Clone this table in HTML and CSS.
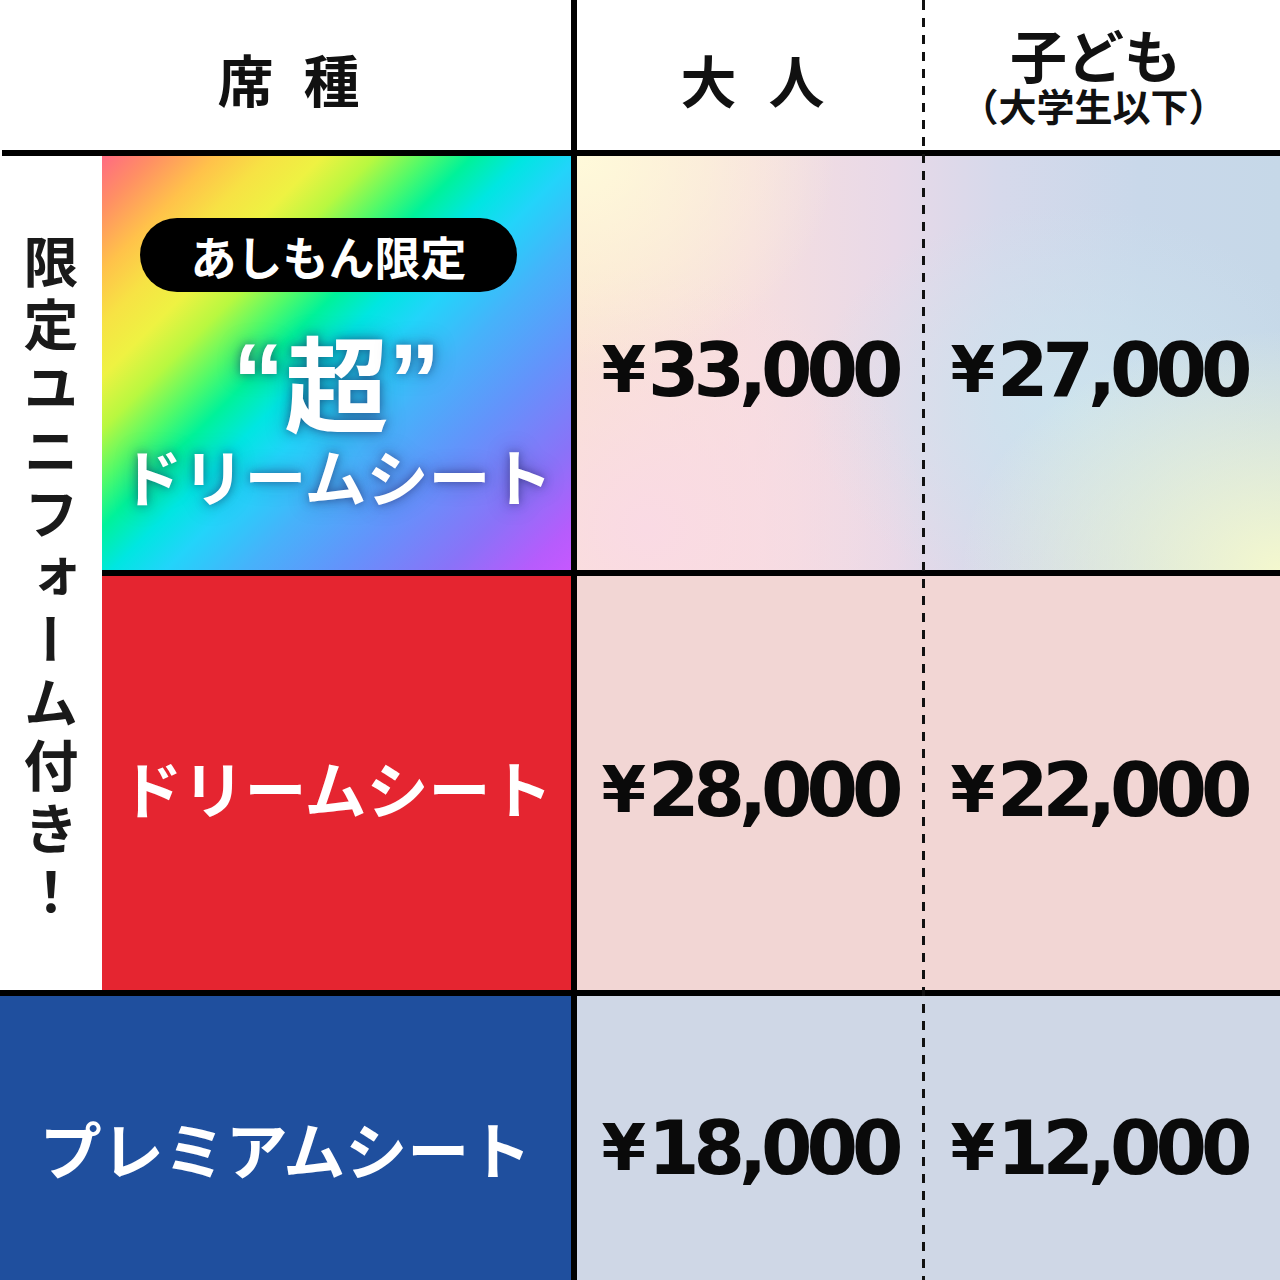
FILE: index.html
```html
<!DOCTYPE html>
<html lang="ja">
<head>
<meta charset="utf-8">
<title>席種・料金</title>
<link rel="stylesheet" href="styles.css">
</head>
<body>
<div class="chart">
  <div class="hd hd-seat"><span>席</span><span>種</span></div>
  <div class="hd hd-adult"><span>大</span><span>人</span></div>
  <div class="hd hd-child">
    <div class="child-main">子ども</div>
    <div class="child-sub">（大学生以下）</div>
  </div>
  <div class="hline hline-top"></div>

  <div class="vtext">限定ユニフォーム付き！</div>

  <div class="seat seat-super">
    <div class="pill">あしもん限定</div>
    <div class="super-title"><span class="q">“</span>超<span class="q">”</span></div>
    <div class="super-name">ドリームシート</div>
  </div>
  <div class="pricebg bg1"></div>
  <div class="price r1 c-adult"><span class="yen">¥</span>33,000</div>
  <div class="price r1 c-child"><span class="yen">¥</span>27,000</div>

  <div class="hline hline-mid"></div>

  <div class="seat seat-dream">ドリームシート</div>
  <div class="pricebg bg2"></div>
  <div class="price r2 c-adult"><span class="yen">¥</span>28,000</div>
  <div class="price r2 c-child"><span class="yen">¥</span>22,000</div>

  <div class="hline hline-low"></div>

  <div class="seat seat-premium">プレミアムシート</div>
  <div class="pricebg bg3"></div>
  <div class="price r3 c-adult"><span class="yen">¥</span>18,000</div>
  <div class="price r3 c-child"><span class="yen">¥</span>12,000</div>

  <div class="vline"></div>
  <div class="dash"></div>
</div>
</body>
</html>
```

FILE: styles.css
```css
html, body {
  margin: 0;
  padding: 0;
  background: #fff;
}

.chart {
  display: grid;
  grid-template-columns: 102px 469px 6px 345px 3px 355px;
  grid-template-rows: 150px 6px 414px 6px 414px 6px 284px;
  width: 1280px;
  height: 1280px;
  background: #fff;
  font-family: "Noto Sans CJK JP", "Noto Sans", sans-serif;
  color: #111;
}

/* header */
.hd {
  display: flex;
  align-items: center;
  justify-content: center;
  font-weight: 700;
  grid-row: 1;
}
.hd-seat {
  grid-column: 1 / 3;
  gap: 30px;
  font-size: 56px;
  padding-top: 4px;
  padding-left: 6px;
}
.hd-adult {
  grid-column: 4;
  gap: 32px;
  font-size: 56px;
  padding-top: 6px;
  padding-left: 6px;
}
.hd-child {
  grid-column: 6;
  flex-direction: column;
  padding-right: 14px;
  padding-top: 0;
}
.child-main {
  font-size: 57px;
  line-height: 58px;
}
.child-sub {
  font-size: 38px;
  line-height: 42px;
  margin-top: 2px;
  margin-left: -4px;
}

.hline {
  background: #000;
}
.hline-top {
  grid-column: 1 / -1;
  grid-row: 2;
  margin-left: 2px;
}
.hline-mid {
  grid-column: 2 / -1;
  grid-row: 4;
}
.hline-low {
  grid-column: 1 / -1;
  grid-row: 6;
}

.vline {
  grid-column: 3;
  grid-row: 1 / -1;
  background: #000;
}
.dash {
  grid-column: 5;
  grid-row: 1 / -1;
  background: repeating-linear-gradient(to bottom, #111 0 9px, transparent 9px 17px);
  background-position: 0 1px;
}

/* vertical label */
.vtext {
  grid-column: 1;
  grid-row: 3 / 6;
  display: flex;
  align-items: center;
  justify-content: center;
  writing-mode: vertical-rl;
  text-orientation: upright;
  font-size: 55px;
  font-weight: 700;
  letter-spacing: 8px;
  color: #1a1a1a;
  padding-top: 14px;
}

/* seat cells */
.seat {
  display: flex;
  align-items: center;
  justify-content: center;
  color: #fff;
}
.seat-super {
  grid-column: 2;
  grid-row: 3;
  flex-direction: column;
  justify-content: flex-start;
  padding-top: 62px;
  background: linear-gradient(135deg,
    #ff6a82 0%,
    #ff8f64 6%,
    #ffc24a 13%,
    #f7e244 19%,
    #eef242 25%,
    #b8f840 31%,
    #50fa6a 37%,
    #00f29a 42%,
    #00e6e2 48%,
    #22d4fa 54%,
    #46b2fa 63%,
    #6492fb 74%,
    #8a72f8 86%,
    #b65cfc 95%,
    #c658ff 100%);
}
.pill {
  width: 377px;
  height: 74px;
  border-radius: 37px;
  background: #000;
  color: #fff;
  font-size: 46px;
  font-weight: 700;
  line-height: 74px;
  text-align: center;
  margin-right: 16px;
}
.super-title {
  display: flex;
  align-items: center;
  height: 96px;
  font-size: 104px;
  font-weight: 700;
  line-height: 96px;
  margin-top: 40px;
  text-shadow: 0 0 10px rgba(30, 30, 90, 0.55), 0 0 22px rgba(30, 30, 90, 0.35);
}
.super-title .q {
  font-family: "Liberation Sans", "Noto Sans", sans-serif;
  font-weight: 700;
  font-size: 104px;
  line-height: 96px;
  align-self: flex-start;
  height: 96px;
}
.super-name {
  font-size: 62px;
  font-weight: 700;
  line-height: 62px;
  margin-top: 16px;
  text-shadow: 0 0 10px rgba(30, 30, 90, 0.55), 0 0 22px rgba(30, 30, 90, 0.35);
}
.seat-dream {
  grid-column: 2;
  grid-row: 5;
  background: #e52530;
  font-size: 62px;
  font-weight: 700;
  padding-top: 8px;
}
.seat-premium {
  grid-column: 1 / 3;
  grid-row: 7;
  background: #1f4f9e;
  font-size: 62px;
  font-weight: 700;
  padding-top: 20px;
}

/* price cells */
.pricebg.bg1 {
  grid-column: 4 / 7;
  grid-row: 3;
  background:
    radial-gradient(ellipse 260px 220px at 0% 0%, rgba(255, 250, 218, 1) 0%, rgba(255, 248, 216, 0) 100%),
    radial-gradient(ellipse 320px 240px at 100% 100%, rgba(244, 248, 206, 1) 0%, rgba(238, 246, 212, 0) 100%),
    radial-gradient(ellipse 280px 260px at 10% 90%, rgba(250, 218, 228, 1) 0%, rgba(250, 218, 228, 0) 100%),
    radial-gradient(ellipse 260px 200px at 70% 60%, rgba(204, 228, 238, 0.9) 0%, rgba(204, 228, 238, 0) 100%),
    linear-gradient(90deg, #fae4d2 0%, #f6dedf 25%, #e8d9e8 45%, #d6d9eb 60%, #c9d8ea 80%, #c6d8e8 100%);
}
.pricebg.bg2 {
  grid-column: 4 / 7;
  grid-row: 5;
  background: #f2d6d4;
}
.pricebg.bg3 {
  grid-column: 4 / 7;
  grid-row: 7;
  background: #cfd7e6;
}

.price {
  display: flex;
  align-items: center;
  justify-content: center;
  font-family: "DejaVu Sans", "Liberation Sans", sans-serif;
  font-weight: 700;
  font-size: 74px;
  letter-spacing: -6px;
  color: #0a0a0a;
  padding-top: 14px;
}
.price .yen {
  font-size: 64px;
  letter-spacing: 0;
  margin-right: 2px;
}
.r1 { grid-row: 3; }
.r2 { grid-row: 5; }
.r3 { grid-row: 7; padding-top: 20px; }
.c-adult { grid-column: 4; }
.c-child { grid-column: 6; padding-right: 8px; }
```
